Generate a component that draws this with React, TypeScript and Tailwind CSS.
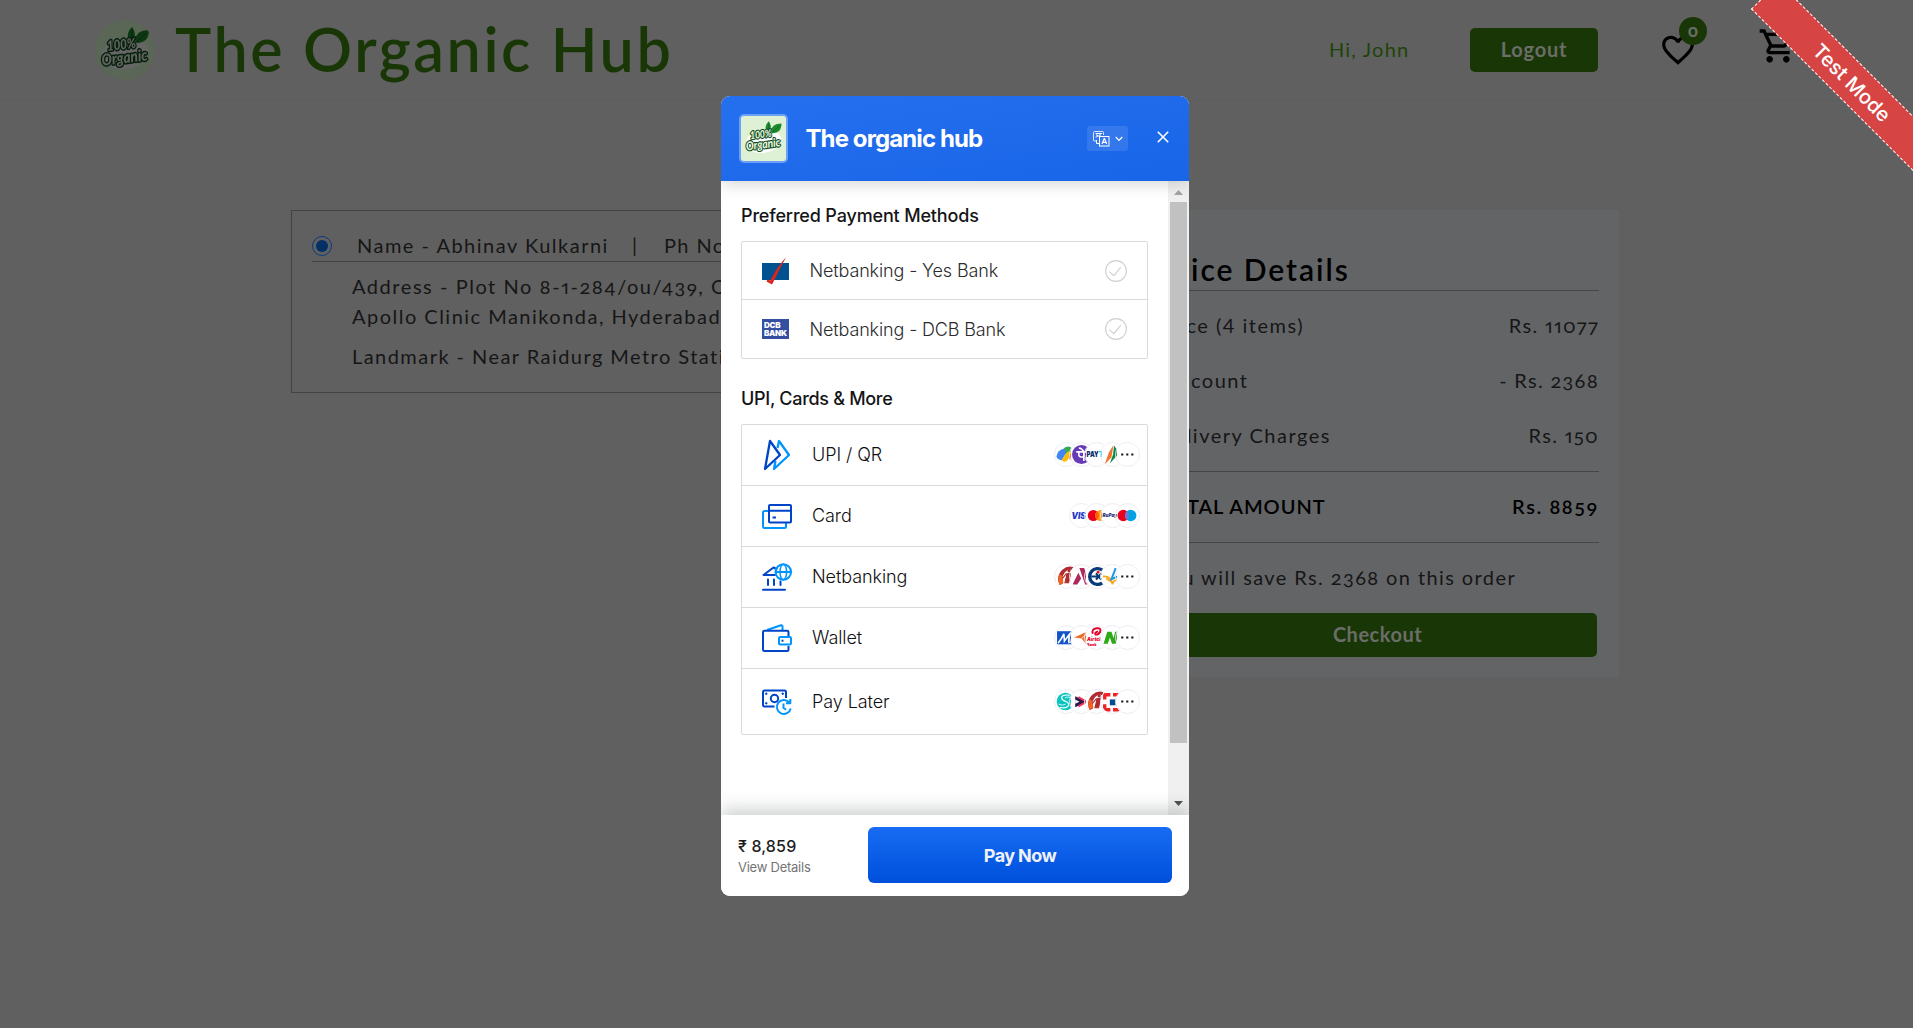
import React from "react";
import { MdFavoriteBorder, MdOutlineShoppingCart } from "react-icons/md";

const PAGE_FONT = "font-['Lato','Liberation_Sans',sans-serif]";
const MODAL_FONT = "font-['Inter','Liberation_Sans',sans-serif]";

function OrganicLogo({ className }: { className: string }) {
  return (
    <svg viewBox="0 0 60 60" className={className}>
      <ellipse cx="30" cy="34" rx="24" ry="15" fill="#fff" transform="rotate(-8 30 34)" />
      <path d="M35 21c-4-5-2-10 2-14 3 4 4 9 1 14z" fill="#1d8a2c" />
      <path d="M40 22c0-8 5-12 14-12 0 8-4 13-12 13z" fill="#1d8a2c" />
      <path d="M37 20l0-10M42 22l9-9" stroke="#0b5a1b" strokeWidth="0.8" />
      <g
        fontFamily="Lato, sans-serif"
        fontStyle="italic"
        fontWeight="900"
        fill="#eaf6df"
        stroke="#0b4a22"
        strokeWidth="3"
        paintOrder="stroke"
        strokeLinejoin="round"
        transform="rotate(-7 30 34)"
      >
        <text x="13" y="29" fontSize="14" textLength="29" lengthAdjust="spacingAndGlyphs">100%</text>
        <text x="6" y="43" fontSize="16" textLength="46" lengthAdjust="spacingAndGlyphs">Organic</text>
      </g>
    </svg>
  );
}

function Header() {
  return (
    <header className="flex h-[101px] items-center border-b border-[#5d5d5d] pl-[95px]">
      <div className="h-[60px] w-[60px] overflow-hidden rounded-full bg-[#5a6656]">
        <OrganicLogo className="h-full w-full brightness-[0.4]" />
      </div>
      <h1 className="-mt-[3px] ml-[20px] w-[1154px] text-[61px] leading-[72px] font-semibold tracking-[2.6px] text-[#193706]">
        The Organic Hub
      </h1>
      <span className="-mt-[2px] w-[141px] text-[20px] tracking-[1.2px] text-[#1f4409]">Hi, John</span>
      <button className="h-[44px] w-[128px] rounded-[5px] bg-[#193706] pb-[2px] text-[20px] font-bold tracking-[0.8px] text-[#6a6d68]">
        Logout
      </button>
      <div className="relative ml-[61px]">
        <MdFavoriteBorder className="h-[38px] w-[38px] text-black" />
        <span className="absolute -top-[14px] left-[20px] flex h-7 w-7 items-center justify-center rounded-full bg-[#193706] pb-[2px] text-[18px] font-bold text-[#6a6d68]">
          o
        </span>
      </div>
      <MdOutlineShoppingCart className="-mt-2 ml-[61px] h-10 w-10 text-black" />
    </header>
  );
}

function AddressCard() {
  return (
    <section className="h-[183px] w-[780px] border border-[#434343] px-[20px] pt-[20px] text-[20px] whitespace-nowrap text-[#161616]">
      <div className="flex h-[31px] items-center border-b border-[#434343]">
        <span className="flex h-5 w-5 items-center justify-center rounded-full border border-[#083c7c]">
          <span className="h-3 w-3 rounded-full bg-[#022f66]" />
        </span>
        <span className="-mt-[2px] ml-[25px] w-[275px] tracking-[1.5px]">Name - Abhinav Kulkarni</span>
        <span className="-mt-[2px] w-[32px]">|</span>
        <span className="-mt-[2px] tracking-[1.4px]">Ph No</span>
      </div>
      <div className="-mt-[1px] pl-[40px] leading-[30px]">
        <p className="pt-[10px] tracking-[1.55px] oldstyle-nums proportional-nums">Address - Plot No 8-1-284/ou/439, Opp</p>
        <p className="tracking-[1.48px]">Apollo Clinic Manikonda, Hyderabad</p>
        <p className="pt-[10px] tracking-[1.45px]">Landmark - Near Raidurg Metro Station</p>
      </div>
    </section>
  );
}

function PriceRow({ label, value }: { label: string; value: string }) {
  return (
    <div className="flex h-[55px] items-center justify-between">
      <span className="tracking-[1.5px]">{label}</span>
      <span className="tracking-[1.3px] oldstyle-nums proportional-nums">{value}</span>
    </div>
  );
}

function PriceDetails() {
  return (
    <section className="h-[467px] w-[481px] bg-[#636466] px-[20px] pt-[40px] text-[20px] tracking-[1.2px] text-[#161616]">
      <h2 className="h-[41px] border-b border-[#444546] text-[30px] leading-[38px] font-semibold tracking-[1.950px] text-black">
        Price Details
      </h2>
      <div className="h-[181px] border-b border-[#444546] pt-[6px]">
        <PriceRow label="Price (4 items)" value="Rs. 11077" />
        <PriceRow label="Discount" value="- Rs. 2368" />
        <PriceRow label="Delivery Charges" value="Rs. 150" />
      </div>
      <div className="flex h-[71px] items-center justify-between border-b border-[#444546] pb-[2px] font-semibold text-black">
        <span className="tracking-[1px]">TOTAL AMOUNT</span>
        <span className="tracking-[1.6px] oldstyle-nums">Rs. 8859</span>
      </div>
      <p className="h-[70px] leading-[68px] tracking-[1.4px] oldstyle-nums">You will save Rs. 2368 on this order</p>
      <button className="h-[44px] w-[439px] rounded-[5px] bg-[#193706] pb-[2px] text-[20px] font-bold tracking-[0.5px] text-[#6a6d68]">
        Checkout
      </button>
    </section>
  );
}

function CheckCircle() {
  return (
    <svg viewBox="0 0 22 22" className="h-[22px] w-[22px]" fill="none" stroke="#d0d0d0">
      <circle cx="11" cy="11" r="10.4" strokeWidth="1.1" />
      <path d="M4.3 11.6l4.6 4 6.8-8.3" strokeWidth="1.2" />
    </svg>
  );
}

function BankRow({ icon, label, last }: { icon: React.ReactNode; label: string; last?: boolean }) {
  return (
    <div className={`flex items-center pr-[20px] pl-[20px] ${last ? "h-[58px]" : "h-[58px] border-b border-[#dadada]"}`}>
      <span className="w-[47.500px]">{icon}</span>
      <span className="flex-1 text-[18px] font-light tracking-[-0.14px] text-[#2c2c2e]">{label}</span>
      <CheckCircle />
    </div>
  );
}

const YesBank = (
  <svg viewBox="0 0 27 28" className="h-[28px] w-[27px]">
    <rect y="6" width="27" height="17" fill="#00518f" />
    <path d="M24 .5C19 9 14.500 19 10 27.500L4.500 24.500l1-2 3 1C12.500 15 18 6.500 24 .5z" fill="#d9251d" />
  </svg>
);

const DcbBank = (
  <span className="flex h-[20px] w-[27px] flex-col justify-center bg-[#344ea2] pl-[2px] text-[8px] leading-[8px] font-black tracking-[-0.3px] text-white">
    <span>DCB</span>
    <span>BANK</span>
  </span>
);

const D = "#0044c7";
const L = "#0094ff";

const UpiIcon = (
  <svg viewBox="0 0 30 32" className="h-[32px] w-[30px]" fill="none" strokeWidth="2.300" strokeLinejoin="round">
    <path d="M15.500 9L17 2 27 16 12 30l1.500-8" stroke={L} />
    <path d="M8 2l10 14L3 30z" stroke={D} />
  </svg>
);
const CardIcon = (
  <svg viewBox="0 0 30 26" className="h-[26px] w-[30px]" fill="none" strokeWidth="2" strokeLinejoin="round">
    <path d="M6 8H2.500Q1 8 1 9.500V23.500Q1 25 2.500 25H22.500Q24 25 24 23.500V19.500" stroke={L} />
    <rect x="7" y="2" width="22" height="17.500" rx="1" stroke={D} />
    <path d="M7 7.700H29M10.500 14.500h3.500" stroke={D} />
  </svg>
);
const BankIcon = (
  <svg viewBox="0 0 30 28" className="h-[28px] w-[30px]" fill="none" strokeWidth="2" strokeLinecap="round" strokeLinejoin="round">
    <path d="M14.500 6L11.500 4.500 1.500 12H13M6 16.500v5.500M12 16.500v5.500M18.500 18.500v3.500M1 26.800H23" stroke={D} />
    <circle cx="21.300" cy="9" r="7.700" stroke={L} />
    <ellipse cx="21.300" cy="9" rx="3.300" ry="7.700" stroke={L} strokeWidth="1.500" />
    <path d="M13.600 9h15.400" stroke={L} />
  </svg>
);
const WalletIcon = (
  <svg viewBox="0 0 30 28" className="h-[28px] w-[30px]" fill="none" strokeWidth="2" strokeLinejoin="round">
    <path d="M5 6L19 1.300Q20.500 1 20.500 2.500V6" stroke={L} />
    <path d="M26.500 12V8Q26.500 6.700 25 6.700H2.500Q1 6.700 1 8V25.500Q1 27 2.500 27H25Q26.500 27 26.500 25.500V22" stroke={D} />
    <rect x="17" y="13" width="12" height="7.500" rx="1.200" stroke={L} />
    <path d="M19.500 16.700h2" stroke={D} />
  </svg>
);
const LaterIcon = (
  <svg viewBox="0 0 30 28" className="h-[28px] w-[30px]" fill="none" strokeWidth="2" strokeLinejoin="round">
    <path d="M12.500 18.500H2.500Q1 18.500 1 17V4Q1 2.500 2.500 2.500H22.500Q24 2.500 24 4V10M3.500 6.500l1.500-1.500M20 5l1.500 1.500M3.500 14.500l1.500 1.500" stroke={D} />
    <circle cx="12.500" cy="10.500" r="3.700" stroke={D} />
    <path d="M27 14.200A7 7 0 1 0 28.700 20.500M28.300 11v4.300H24M21.500 15.500v4.500l2.700 1.600" stroke={L} />
  </svg>
);

const logo = "h-[21px] w-[21px] bg-white";
const VB = "2 2 20 20";

const GPay = (
  <svg viewBox={VB} className={logo}>
    <path d="M8 7.500Q11 4 15 4.500q3 1 2.500 5.500l-6 2z" fill="#34a853" />
    <path d="M14 9l5 2v6h-4z" fill="#ea4335" />
    <path d="M3.500 10.500Q6 6.500 10 6.800l1.500 4-4 6.700Q3 17 2.500 14z" fill="#4285f4" />
    <path d="M12.500 9.500q3-1 4.500 1l-4.500 7.500q-3 2-5-.5z" fill="#fbbc04" />
  </svg>
);
const PhonePe = (
  <svg viewBox={VB} className={logo}>
    <circle cx="12" cy="12" r="9" fill="#673ab7" />
    <path d="M7 9.500h9.500M9.500 9.500v3q0 2.200 4.700 1.800M14.200 9.500v8.800M9.500 5.800q3 .2 4.700 3.500" stroke="#fff" strokeWidth="1.500" fill="none" />
  </svg>
);
const Paytm = (
  <svg viewBox={VB} className={logo}>
    <text x="2.500" y="14.500" fontSize="7" fontWeight="900" fill="#0b2b6b" textLength="15.500" lengthAdjust="spacingAndGlyphs">
      PAY<tspan fill="#00b9f1">T</tspan>
    </text>
  </svg>
);
const Bhim = (
  <svg viewBox={VB} className={logo}>
    <path d="M13 3L8.500 10 4.500 21.500 11 14.500z" fill="#ed752e" />
    <path d="M13.500 3.500L18.500 10.500 9.500 20.500 12.500 12z" fill="#0e8a49" />
  </svg>
);
const Visa = (
  <svg viewBox={VB} className={logo}>
    <text x="2.500" y="15" fontSize="8" fontWeight="900" fontStyle="italic" fill="#1b36c9" textLength="13.500" lengthAdjust="spacingAndGlyphs">VIS</text>
  </svg>
);
const Mastercard = (
  <svg viewBox={VB} className={logo}>
    <circle cx="9" cy="12" r="5.300" fill="#eb001b" />
    <circle cx="16" cy="12" r="5.300" fill="#f79e1b" />
    <path d="M12.500 8.100a5.300 5.300 0 0 1 0 7.800a5.300 5.300 0 0 1 0-7.800z" fill="#ff5f00" />
  </svg>
);
const Rupay = (
  <svg viewBox={VB} className={logo}>
    <text x="2.500" y="13.800" fontSize="5" fontWeight="900" fontStyle="italic" fill="#2b2f7c" textLength="14" lengthAdjust="spacingAndGlyphs">RuPay</text>
  </svg>
);
const Maestro = (
  <svg viewBox={VB} className={logo}>
    <circle cx="8" cy="12" r="5.500" fill="#eb001b" />
    <circle cx="15" cy="12" r="5.500" fill="#00a2e5" />
    <path d="M11.500 7.800a5.500 5.500 0 0 1 0 8.400a5.500 5.500 0 0 1 0-8.400z" fill="#7375cf" />
  </svg>
);
const Icici = (
  <svg viewBox={VB} className={logo}>
    <path d="M5.500 20Q1.500 12 8 5.500 13 1.500 18 3q1 1.500-1 3-3-2-6.500 2Q6.500 13 8.500 19z" fill="#b02a30" />
    <path d="M5.500 20Q3 14 5.500 9.500L8.500 12l.5 6z" fill="#f06321" />
    <circle cx="14.500" cy="6.500" r="1.600" fill="#b02a30" />
    <path d="M12.500 9.500l3.500-.7L14 18h-3.500zM8 14l4-5" fill="#b02a30" stroke="#b02a30" />
  </svg>
);
const Axis = (
  <svg viewBox={VB} className={logo}>
    <path d="M10 4h4.500l6 15.500h-5z" fill="#ae285d" />
    <path d="M9 8.500l2.700 5.500L8 19.500H3.500z" fill="#ae285d" />
  </svg>
);
const Canara = (
  <svg viewBox={VB} className={logo}>
    <path d="M17.500 6a7.500 7.500 0 1 0 0 12" stroke="#063a78" strokeWidth="3.200" fill="none" />
    <path d="M7 12h9M11.500 9l5 6M16.500 9l-5 6" stroke="#063a78" strokeWidth="1.900" />
    <circle cx="13.500" cy="8" r="1.400" fill="#e31e24" />
  </svg>
);
const Idbi = (
  <svg viewBox={VB} className={logo}>
    <path d="M3 12q8-.5 9 7.500 0-3.500 5-4.500M6 14l5 3" stroke="#f7a81b" strokeWidth="1.700" fill="none" />
    <path d="M15 4l-4 10.500 6-2.500" stroke="#1b9be0" strokeWidth="1.900" fill="none" />
  </svg>
);
const Mobikwik = (
  <svg viewBox={VB} className={logo}>
    <rect x="3" y="6" width="14.500" height="12.500" fill="#1254c8" />
    <path d="M4 17.500Q8 12 9.500 8.500l.5 7 5.500-7.500q-2 6-1 9.500" stroke="#fff" strokeWidth="1.500" fill="none" />
  </svg>
);
const Freecharge = (
  <svg viewBox={VB} className={logo}>
    <path d="M5 12L19 5.500 16.500 18.500 12 13z" fill="#ee6c2b" />
    <path d="M12 13l5-4.500" stroke="#fff" strokeWidth=".8" />
  </svg>
);
const Airtel = (
  <svg viewBox={VB} className={logo}>
    <path d="M8.500 8.500Q7 4 12 3.200q5-.5 3.500 3.300-1.500 3.200-4.500 2.700-1-2 2.500-3" stroke="#e4002b" strokeWidth="1.800" fill="none" />
    <g fontWeight="900" fontStyle="italic" fill="#e4002b">
      <text x="3" y="15.500" fontSize="4.500" textLength="13" lengthAdjust="spacingAndGlyphs">Airtel</text>
      <text x="3" y="20" fontSize="3.500">Bank</text>
    </g>
  </svg>
);
const Novo = (
  <svg viewBox={VB} className={logo}>
    <path d="M3.500 18L7 6.500h4l2 6L14.500 6.500h4L15 18h-3.500l-2-6L7.500 18z" fill="#2cab17" />
  </svg>
);
const Simpl = (
  <svg viewBox={VB} className={logo}>
    <circle cx="11" cy="12" r="8.300" fill="#0cc5c0" />
    <path d="M15.500 6Q6.500 5 7.500 9q.5 2 4 3 3.500 1.500 2 4.500-2 2.500-8 1" stroke="#fff" strokeWidth="1.100" fill="none" />
    <path d="M17.500 9q-5-2.500-7 0M4.500 14.500q4 2 6.500 0" stroke="#fff" strokeWidth=".8" fill="none" />
  </svg>
);
const LazyPay = (
  <svg viewBox={VB} className={logo}>
    <path d="M6 7L17 12.200 6 17.500z" fill="#2c1a4a" />
    <path d="M9 7.800l8 4.400-8 4.400" stroke="#f0325f" strokeWidth="1.800" fill="none" />
    <path d="M6 10.200l4 2-4 2" fill="#fff" />
  </svg>
);
const Kotak = (
  <svg viewBox={VB} className={logo}>
    <path d="M3 4h7v3.200H6.200V10H3zM12.500 4H19v3.200h-6.500zM3 14.500h3.200V18.300H10v3.200H3zM12.500 18.300H19v3.200h-6.500z" fill="#ed232a" />
    <rect x="9.500" y="10" width="5.600" height="5.600" fill="#004c8f" />
  </svg>
);
const More = (
  <svg viewBox={VB} className={logo}>
    <path d="M6 11h2v2H6zM10.800 11h2v2h-2zM15.600 11h2v2h-2z" fill="#151515" />
  </svg>
);

function LogoStack({ items }: { items: React.ReactNode[] }) {
  return (
    <div className="-mt-[1px] flex">
      {items.map((item, i) => (
        <span
          key={i}
          className="-ml-[9.700px] flex h-[25px] w-[25px] shrink-0 items-center justify-center overflow-hidden rounded-full border border-[#ebedf2] first:ml-0"
        >
          {item}
        </span>
      ))}
    </div>
  );
}

const METHODS = [
  { label: "UPI / QR", icon: UpiIcon, logos: [GPay, PhonePe, Paytm, Bhim, More] },
  { label: "Card", icon: CardIcon, logos: [Visa, Mastercard, Rupay, Maestro] },
  { label: "Netbanking", icon: BankIcon, logos: [Icici, Axis, Canara, Idbi, More] },
  { label: "Wallet", icon: WalletIcon, logos: [Mobikwik, Freecharge, Airtel, Novo, More] },
  { label: "Pay Later", icon: LaterIcon, logos: [Simpl, LazyPay, Icici, Kotak, More] },
];

function ModalHeader() {
  return (
    <div className="relative z-10 flex h-[85px] shrink-0 items-center bg-linear-to-br from-[#2470ef] to-[#1965e8] pl-[18px] shadow-[0_4px_14px_rgba(0,0,0,0.15)]">
      <div className="-mt-[1px] h-[49px] w-[49px] rounded-[5px] border-2 border-[#6d9ff5] bg-[#dff1d5]">
        <OrganicLogo className="h-full w-full" />
      </div>
      <h2 className="ml-[17.500px] w-[281.500px] text-[24px] font-bold tracking-[-0.9px] text-white">The organic hub</h2>
      <button className="flex h-[25px] w-[41px] items-center justify-center gap-[5px] rounded-[3px] bg-white/10">
        <svg viewBox="0 0 17 16" className="h-[16px] w-[17px]" fill="none" stroke="#fff" strokeWidth="1">
          <path d="M4 10H1.500Q.5 10 .5 9V1.500Q.5 .5 1.500 .5H9.500Q10.500 .5 10.500 1.500V4" strokeOpacity=".8" />
          <rect x="6.500" y="5.500" width="9.500" height="9.500" />
          <path d="M2.500 2.500H9M3 4q2-.5 1.500 1Q4 6.500 2.500 6M7 2.500v3M4.500 5h2.500M3.500 9v3.500h2.500" />
          <path d="M9 13l2.200-5.500h.3L13.700 13M9.700 11.300h3.200" strokeWidth="1.200" />
        </svg>
        <svg viewBox="0 0 8 6" className="h-[6px] w-[8px]" fill="none" stroke="#fff" strokeWidth="1.200">
          <path d="M.7 1l3.300 3.500L7.300 1" />
        </svg>
      </button>
      <svg viewBox="0 0 12 12" className="-mt-[3px] ml-[29px] h-[12px] w-[12px]" stroke="#fff" strokeWidth="1.600">
        <path d="M.8.8l10.400 10.400M11.200.8L.8 11.200" />
      </svg>
    </div>
  );
}

function Scrollbar() {
  return (
    <div className="flex w-[21px] flex-col items-center bg-[#f0f0f0]">
      <div className="flex h-[21px] items-center justify-center pt-[2px]">
        <svg viewBox="0 0 9 5" className="h-[5px] w-[9px]">
          <path d="M0 5L4.500 0 9 5z" fill="#a3a3a3" />
        </svg>
      </div>
      <div className="h-[541px] w-[17px] bg-[#c1c1c1]" />
      <div className="flex flex-1 items-end pb-[9px]">
        <svg viewBox="0 0 9 5" className="h-[5px] w-[9px]">
          <path d="M0 0L4.500 5 9 0z" fill="#505050" />
        </svg>
      </div>
    </div>
  );
}

function PaymentModal() {
  return (
    <div className={`flex h-[800px] w-[468px] flex-col overflow-hidden rounded-[9px] bg-white ${MODAL_FONT}`}>
      <ModalHeader />
      <div className="flex h-[634px]">
        <div className="flex-1 pt-[22px] pr-[20px] pl-[20px]">
          <h3 className="text-[18px] leading-[26px] font-medium tracking-[-0.16px] text-[#151517]">
            Preferred Payment Methods
          </h3>
          <div className="mt-[12px] rounded-[2px] border border-[#dadada]">
            <BankRow icon={YesBank} label="Netbanking - Yes Bank" />
            <BankRow icon={DcbBank} label="Netbanking - DCB Bank" last />
          </div>
          <h3 className="mt-[27px] text-[18px] leading-[26px] font-medium tracking-[-0.3px] text-[#151517]">
            UPI, Cards &amp; More
          </h3>
          <div className="mt-[12px] rounded-[2px] border border-[#dadada]">
            {METHODS.map((m) => (
              <div
                key={m.label}
                className="flex h-[61px] items-center border-b border-[#dadada] pr-[7px] pl-[20px] last:h-[65px] last:border-b-0"
              >
                <span className="w-[50px]">{m.icon}</span>
                <span className="-mt-[1px] flex-1 text-[18px] font-light tracking-[-0.08px] text-[#101012]">{m.label}</span>
                <LogoStack items={m.logos} />
              </div>
            ))}
          </div>
        </div>
        <Scrollbar />
      </div>
      <div className="relative z-10 flex h-[81px] items-center bg-white pb-[1px] pl-[17px] shadow-[0_-6px_16px_rgba(30,50,40,0.22)]">
        <div className="w-[130px] pt-[1px]">
          <div className="text-[16px] leading-[22px] font-medium tracking-[0.15px] text-[#1c1c1e]">₹ 8,859</div>
          <div className="text-[13px] leading-[20px] tracking-[-0.25px] text-[#747476]">View Details</div>
        </div>
        <button className="h-[56px] w-[304px] rounded-[6px] bg-linear-to-b from-[#186cf3] to-[#004fdb] text-[18px] font-bold tracking-[-0.6px] text-[#f0f2fb]">
          Pay Now
        </button>
      </div>
    </div>
  );
}

export default function App() {
  return (
    <div className={`relative h-[1028px] w-full overflow-hidden bg-[#606060] ${PAGE_FONT}`}>
      <Header />
      <main className="flex justify-between pt-[109px] pr-[294px] pl-[291px]">
        <AddressCard />
        <PriceDetails />
      </main>
      <div className="absolute inset-0 flex justify-center pt-[96px] pr-[3px]">
        <PaymentModal />
      </div>
      <div
        className={`absolute top-[62px] left-[1729px] flex h-[39px] w-[244px] rotate-45 items-center justify-center border border-dashed border-white bg-[#d64444] pl-[3px] text-[20px] font-medium text-white ${MODAL_FONT}`}
      >
        Test Mode
      </div>
    </div>
  );
}
